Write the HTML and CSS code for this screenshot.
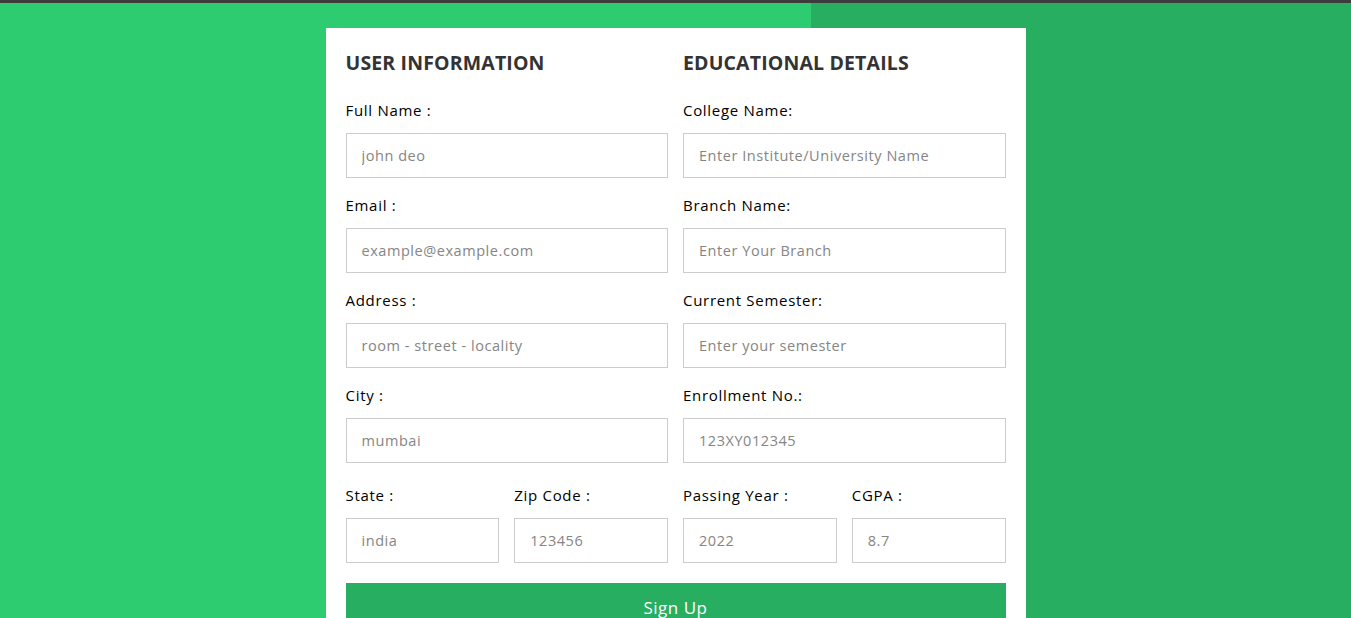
FILE: index.html
```html
<!DOCTYPE html>
<html lang="en">
<head>
<meta charset="utf-8">
<title>Registration</title>
<link rel="stylesheet" href="styles.css">
</head>
<body>
<div class="page">
  <form class="card">
    <div class="columns">
      <div class="col">
        <h2 class="title">USER INFORMATION</h2>
        <div class="field">
          <label class="label">Full Name :</label>
          <input class="input" type="text" placeholder="john deo">
        </div>
        <div class="field">
          <label class="label">Email :</label>
          <input class="input" type="text" placeholder="example@example.com">
        </div>
        <div class="field">
          <label class="label">Address :</label>
          <input class="input" type="text" placeholder="room - street - locality">
        </div>
        <div class="field">
          <label class="label">City :</label>
          <input class="input" type="text" placeholder="mumbai">
        </div>
        <div class="pair">
          <div class="field last">
            <label class="label">State :</label>
            <input class="input" type="text" placeholder="india">
          </div>
          <div class="field last">
            <label class="label">Zip Code :</label>
            <input class="input" type="text" placeholder="123456">
          </div>
        </div>
      </div>
      <div class="col">
        <h2 class="title">EDUCATIONAL DETAILS</h2>
        <div class="field">
          <label class="label">College Name:</label>
          <input class="input" type="text" placeholder="Enter Institute/University Name">
        </div>
        <div class="field">
          <label class="label">Branch Name:</label>
          <input class="input" type="text" placeholder="Enter Your Branch">
        </div>
        <div class="field">
          <label class="label">Current Semester:</label>
          <input class="input" type="text" placeholder="Enter your semester">
        </div>
        <div class="field">
          <label class="label">Enrollment No.:</label>
          <input class="input" type="text" placeholder="123XY012345">
        </div>
        <div class="pair">
          <div class="field last">
            <label class="label">Passing Year :</label>
            <input class="input" type="text" placeholder="2022">
          </div>
          <div class="field last">
            <label class="label">CGPA :</label>
            <input class="input" type="text" placeholder="8.7">
          </div>
        </div>
      </div>
    </div>
    <button class="submit" type="button">Sign Up</button>
  </form>
</div>
</body>
</html>
```

FILE: styles.css
```css
* {
  box-sizing: border-box;
  margin: 0;
  padding: 0;
}

html, body {
  height: 100%;
}

body {
  font-family: "Open Sans", "Noto Sans", sans-serif;
  border-top: 3px solid #3c3c3c;
  background: linear-gradient(90deg, #2ecc71 60%, #27ae60 60%);
  overflow: hidden;
}

.page {
  padding-top: 25px;
}

.card {
  width: 700px;
  margin: 0 auto;
  background: #fff;
  padding: 20px 20px 40px;
}

.columns {
  display: grid;
  grid-template-columns: 1fr 1fr;
  column-gap: 15px;
}

.col {
  display: flex;
  flex-direction: column;
}

.title {
  font-size: 19.5px;
  line-height: 30px;
  font-weight: 700;
  letter-spacing: 0.15px;
  color: #333;
  margin-bottom: 21px;
}

.field {
  display: flex;
  flex-direction: column;
  margin-bottom: 16px;
}

.field.last {
  margin-bottom: 0;
}

.pair {
  display: grid;
  grid-template-columns: 1fr 1fr;
  column-gap: 15px;
  margin-top: 5px;
}

.label {
  font-size: 15px;
  line-height: 22px;
  letter-spacing: 0.7px;
  color: #000;
  margin-bottom: 12px;
}

.input {
  height: 45px;
  width: 100%;
  border: 1px solid #ccc;
  padding: 0 15px;
  font-family: inherit;
  font-size: 14.5px;
  letter-spacing: 0.55px;
  color: #333;
  outline: none;
}

.input::placeholder {
  color: #858585;
}

.submit {
  display: block;
  width: 100%;
  height: 48px;
  margin-top: 20px;
  border: none;
  background: #27ae60;
  color: #fff;
  font-family: inherit;
  font-size: 17px;
  letter-spacing: 0.5px;
}
```
